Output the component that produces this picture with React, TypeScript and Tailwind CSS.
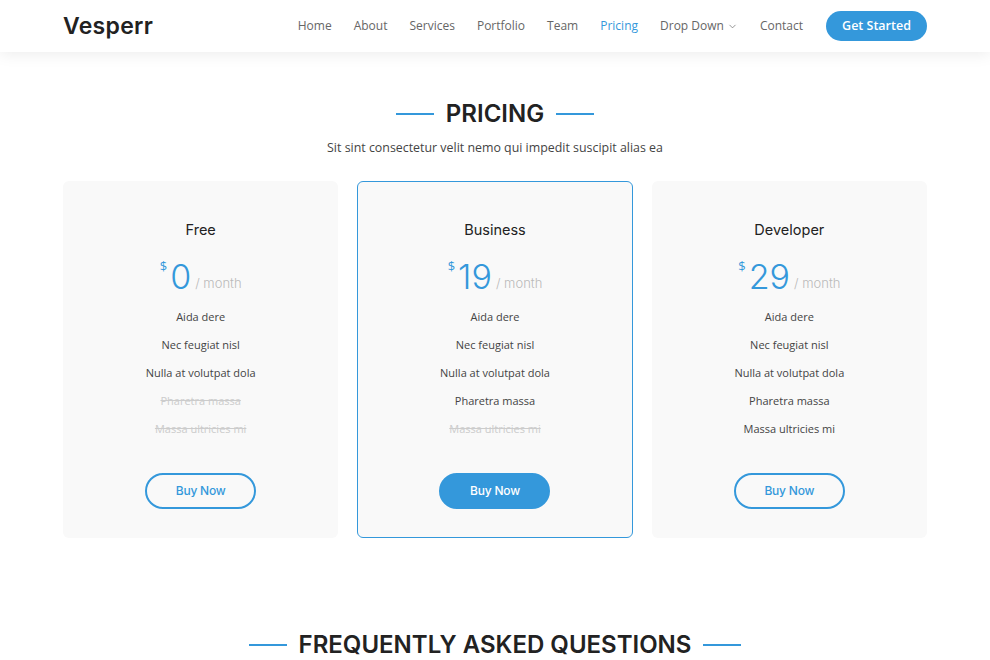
import { ChevronDown } from "lucide-react";

type Plan = {
  name: string;
  price: number;
  featured?: boolean;
  features: { label: string; off?: boolean }[];
};

const plans: Plan[] = [
  {
    name: "Free",
    price: 0,
    features: [
      { label: "Aida dere" },
      { label: "Nec feugiat nisl" },
      { label: "Nulla at volutpat dola" },
      { label: "Pharetra massa", off: true },
      { label: "Massa ultricies mi", off: true },
    ],
  },
  {
    name: "Business",
    price: 19,
    featured: true,
    features: [
      { label: "Aida dere" },
      { label: "Nec feugiat nisl" },
      { label: "Nulla at volutpat dola" },
      { label: "Pharetra massa" },
      { label: "Massa ultricies mi", off: true },
    ],
  },
  {
    name: "Developer",
    price: 29,
    features: [
      { label: "Aida dere" },
      { label: "Nec feugiat nisl" },
      { label: "Nulla at volutpat dola" },
      { label: "Pharetra massa" },
      { label: "Massa ultricies mi" },
    ],
  },
];

const navLinks = ["Home", "About", "Services", "Portfolio", "Team", "Pricing"];

function SectionTitle({ children }: { children: string }) {
  return (
    <div className="flex items-center justify-center gap-3">
      <span className="h-[2px] w-[38px] bg-[#3498db]" />
      <h2 className="font-['Inter',sans-serif] text-[24px] font-semibold uppercase leading-none text-[#222]">
        {children}
      </h2>
      <span className="h-[2px] w-[38px] bg-[#3498db]" />
    </div>
  );
}

function PricingCard({ plan }: { plan: Plan }) {
  return (
    <div
      className={`flex h-[357px] flex-col items-center rounded-md bg-[#f9f9f9] pt-[37px] ${
        plan.featured ? "border border-[#3498db]" : "border border-transparent"
      }`}
    >
      <h3 className="font-['Inter',sans-serif] text-[14.5px] font-normal text-[#222]">
        {plan.name}
      </h3>
      <div className="mt-[20px] flex items-start text-[#3498db]">
        <sup className="mt-[6px] mr-[3px] text-[13px] leading-none">$</sup>
        <span className="font-['Inter',sans-serif] text-[34px] font-light leading-none">
          {plan.price}
        </span>
        <span className="mt-[17px] ml-[4px] font-['Inter',sans-serif] text-[13px] font-light leading-none text-[#bababa]">
          / month
        </span>
      </div>
      <ul className="mt-[14px] flex flex-col items-center gap-[10px] font-['Open_Sans',sans-serif] text-[11px] leading-[18px] text-[#444]">
        {plan.features.map((f) => (
          <li
            key={f.label}
            className={f.off ? "text-[#ccc] line-through" : undefined}
          >
            {f.label}
          </li>
        ))}
      </ul>
      <button
        type="button"
        className={`mt-[35px] h-[36px] w-[111px] rounded-full border-2 border-[#3498db] font-['Inter',sans-serif] text-[12px] font-medium tracking-[-0.2px] ${
          plan.featured ? "bg-[#3498db] text-white" : "text-[#3498db]"
        }`}
      >
        Buy Now
      </button>
    </div>
  );
}

export default function App() {
  return (
    <div className="min-h-[660px] bg-white font-['Open_Sans',sans-serif]">
      <header className="relative z-10 h-[52px] bg-white shadow-[0_2px_15px_rgba(0,0,0,0.08)]">
        <div className="mx-auto flex h-full w-[864px] items-center justify-between">
          <span className="font-['Inter',sans-serif] text-[23px] font-semibold tracking-[0.3px] text-[#222]">
            Vesperr
          </span>
          <nav className="flex items-center">
            <ul className="flex items-center gap-[22px] text-[12px] text-[#666]">
              {navLinks.map((l) => (
                <li
                  key={l}
                  className={l === "Pricing" ? "text-[#3498db]" : undefined}
                >
                  {l}
                </li>
              ))}
              <li className="flex items-center gap-[3px]">
                Drop Down
                <ChevronDown className="h-[11px] w-[11px]" strokeWidth={1.5} />
              </li>
              <li>Contact</li>
            </ul>
            <button
              type="button"
              className="ml-[23px] h-[30px] w-[101px] rounded-full bg-[#3498db] text-[12.5px] font-semibold text-white"
            >
              Get Started
            </button>
          </nav>
        </div>
      </header>

      <section className="pt-[50px]">
        <SectionTitle>Pricing</SectionTitle>
        <p className="mt-[13px] text-center text-[12.4px] text-[#444]">
          Sit sint consectetur velit nemo qui impedit suscipit alias ea
        </p>
        <div className="mx-auto mt-[23px] grid w-[864px] grid-cols-3 gap-[19px]">
          {plans.map((p) => (
            <PricingCard key={p.name} plan={p} />
          ))}
        </div>
      </section>

      <section className="pt-[95px]">
        <SectionTitle>Frequently Asked Questions</SectionTitle>
      </section>
    </div>
  );
}
